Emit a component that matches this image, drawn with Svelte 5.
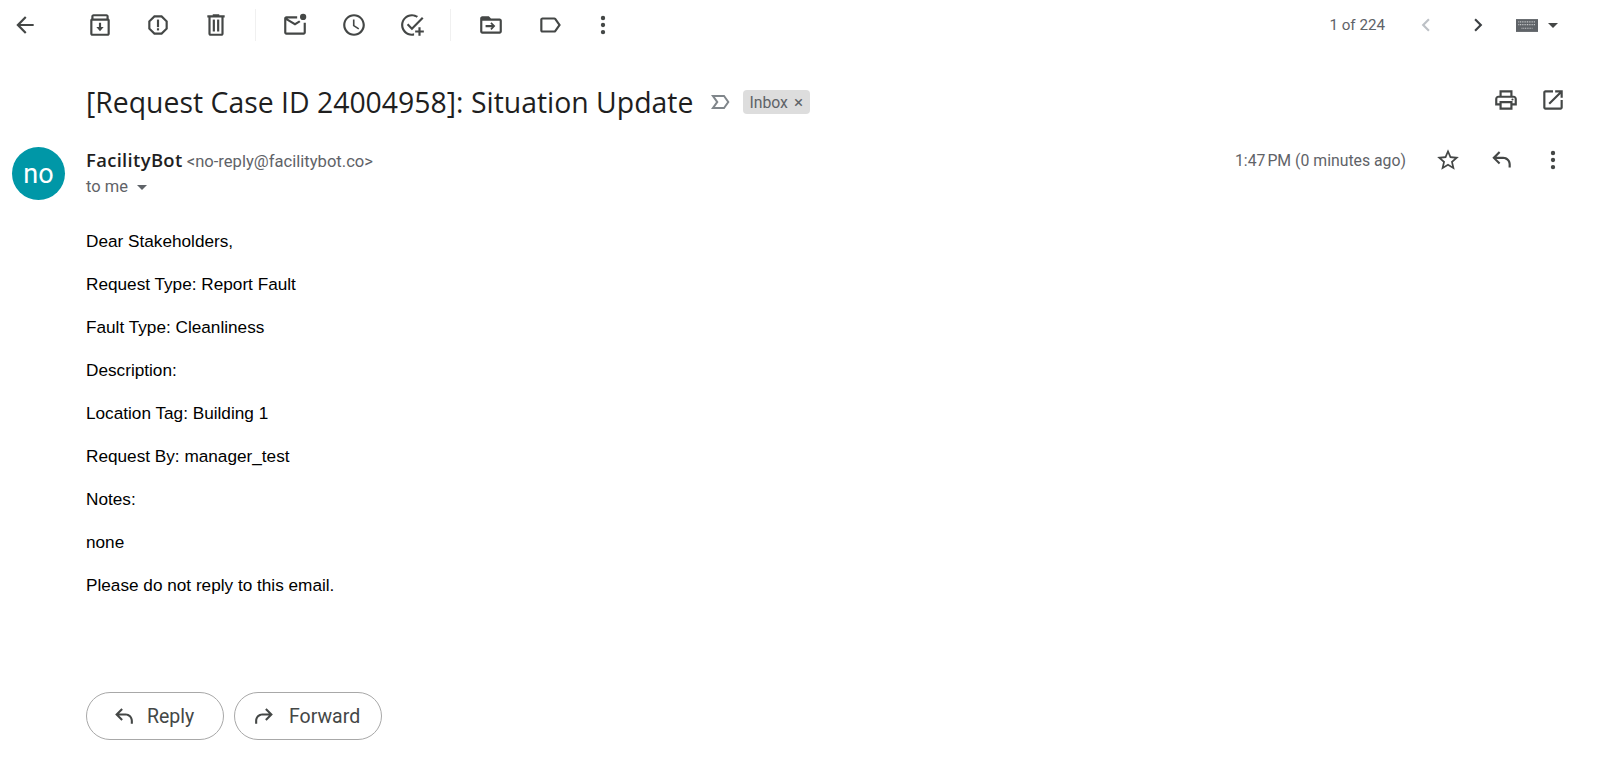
<script>
  const lines = [
    'Dear Stakeholders,',
    'Request Type: Report Fault',
    'Fault Type: Cleanliness',
    'Description:',
    'Location Tag: Building 1',
    'Request By: manager_test',
    'Notes:',
    'none',
    'Please do not reply to this email.'
  ];
</script>

<div class="page">
  <div class="toolbar">
    <button class="ic back" aria-label="Back">
      <svg viewBox="0 0 24 24"><path d="M20 11H7.800l5.600-5.600L12 4l-8 8 8 8 1.400-1.400L7.800 13H20z" /></svg>
    </button>
    <div class="group first">
      <button class="ic" aria-label="Archive">
        <svg viewBox="0 0 24 24"><path d="M20 6V4c0-1.100-.9-2-2-2H6c-1.100 0-2 .9-2 2v2c-.6.400-1 1-1 1.700V20c0 1.100.9 2 2 2h14c1.100 0 2-.9 2-2V7.700c0-.7-.4-1.300-1-1.700zM6 4h12v2H6V4zm13 16H5V8h14v12z" /><path d="M13 10h-2v3.800H8.600l3.400 3.900 3.400-3.900H13z" /></svg>
      </button>
      <button class="ic" aria-label="Report spam">
        <svg viewBox="0 0 24 24"><path d="M15.700 3H8.300L3 8.300v7.400L8.300 21h7.400l5.300-5.300V8.300L15.700 3zM19 14.900 14.900 19H9.100L5 14.900V9.100L9.100 5h5.800L19 9.100v5.800z" /><rect x="11" y="7" width="2" height="7" /><rect x="11" y="15" width="2" height="2" /></svg>
      </button>
      <button class="ic" aria-label="Delete">
        <svg viewBox="0 0 24 24"><path d="M15 3V2H9v1H4v2h1v15c0 1.100.9 2 2 2h10c1.100 0 2-.9 2-2V5h1V3h-5zm2 17H7V5h10v15z" /><rect x="9" y="7" width="2" height="11" /><rect x="13" y="7" width="2" height="11" /></svg>
      </button>
    </div>
    <div class="group second">
      <button class="ic" aria-label="Mark as unread">
        <svg viewBox="0 0 24 24"><path d="M20 19H4V7.500l8 5 5.100-3.200-1.300-1.500L12 10.200 5 6h9V4H4c-1.100 0-2 .9-2 2v13c0 1.100.9 2 2 2h16c1.100 0 2-.9 2-2V10h-2v9z" /><circle cx="19.500" cy="4.500" r="2.900" /></svg>
      </button>
      <button class="ic" aria-label="Snooze">
        <svg viewBox="0 0 24 24"><path d="M12 2C6.500 2 2 6.500 2 12s4.500 10 10 10 10-4.500 10-10S17.500 2 12 2zm0 18c-4.400 0-8-3.600-8-8s3.600-8 8-8 8 3.600 8 8-3.600 8-8 8z" /><path d="M12.500 7H11v6l5 3.200.8-1.300-4.300-2.600z" /></svg>
      </button>
      <button class="ic" aria-label="Add to tasks">
        <svg viewBox="0 0 24 24"><path d="M11 20c-4.400 0-8-3.600-8-8s3.600-8 8-8c1.600 0 3 .5 4.300 1.300l1.400-1.500C15.100 2.700 13.100 2 11 2 5.500 2 1 6.500 1 12s4.500 10 10 10c.7 0 1.300-.1 2-.2V19.700c-.6.200-1.300.3-2 .3z" /><path d="M20.300 4.700 11 14l-3.300-3.300-1.400 1.400L11 16.800 21.700 6.100z" /><path d="M19 14h-2v3h-3v2h3v3h2v-3h3v-2h-3z" /></svg>
      </button>
    </div>
    <div class="group third">
      <button class="ic" aria-label="Move to">
        <svg viewBox="0 0 24 24"><path d="M20 6h-8l-2-2H4c-1.100 0-2 .9-2 2v12c0 1.100.9 2 2 2h16c1.100 0 2-.9 2-2V8c0-1.100-.9-2-2-2zm0 12H4V8h16v10z" /><path d="M12.500 9.500 11.400 10.600 12.800 12H7v2h5.800l-1.400 1.400 1.100 1.100 3.500-3.500z" /></svg>
      </button>
      <button class="ic" aria-label="Labels">
        <svg viewBox="0 0 24 24"><path d="M17.600 5.800C17.200 5.300 16.600 5 16 5H5c-1.100 0-2 .9-2 2v10c0 1.100.9 2 2 2h11c.6 0 1.200-.3 1.600-.8L22 12l-4.400-6.200zM16 17H5V7h11l3.600 5L16 17z" /></svg>
      </button>
      <button class="ic last" aria-label="More">
        <svg viewBox="0 0 24 24"><circle cx="12" cy="5.500" r="2" /><circle cx="12" cy="12" r="2" /><circle cx="12" cy="18.500" r="2" /></svg>
      </button>
    </div>
    <div class="spacer"></div>
    <span class="count">1 of 224</span>
    <button class="ic pager dim" aria-label="Newer">
      <svg viewBox="0 0 24 24"><path d="M15.400 7.400 14 6l-6 6 6 6 1.400-1.400L10.800 12z" /></svg>
    </button>
    <button class="ic pager" aria-label="Older">
      <svg viewBox="0 0 24 24"><path d="M8.600 7.400 10 6l6 6-6 6-1.400-1.400L13.200 12z" /></svg>
    </button>
    <div class="kbd">
      <svg class="keys" viewBox="0 0 24 14"><rect width="24" height="14" fill="#5f6368" /><path d="M2.500 3h19M2.500 6h19M6 10h12" stroke="#c4c6c8" stroke-width="1.300" stroke-dasharray="1.100 .8" /></svg>
      <span class="caret"></span>
    </div>
  </div>

  <div class="subject">
    <h1>[Request Case ID 24004958]: Situation Update</h1>
    <svg class="imp" viewBox="0 0 24 24"><path d="M3 5h13.500l5 7-5 7H3l5-7-5-7zm3.900 2 3.600 5-3.600 5h8.700l3.500-5-3.500-5H6.900z" /></svg>
    <span class="chip">Inbox <span class="x">×</span></span>
    <div class="spacer"></div>
    <button class="ic" aria-label="Print">
      <svg viewBox="0 0 24 24"><path d="M19 8h-1V3H6v5H5c-1.700 0-3 1.300-3 3v6h4v4h12v-4h4v-6c0-1.700-1.300-3-3-3zM8 5h8v3H8V5zm8 14H8v-4h8v4zm4-4h-2v-2H6v2H4v-4c0-.6.4-1 1-1h14c.6 0 1 .4 1 1v4z" /><circle cx="18" cy="11.500" r="1" /></svg>
    </button>
    <button class="ic" aria-label="In new window">
      <svg viewBox="0 0 24 24"><path d="M19 19H5V5h7V3H5c-1.100 0-2 .9-2 2v14c0 1.100.9 2 2 2h14c1.100 0 2-.9 2-2v-7h-2v7z" /><path d="M14 3v2h3.600l-9.800 9.800 1.400 1.400L19 6.400V10h2V3z" /></svg>
    </button>
  </div>

  <div class="message">
    <div class="avatar">no</div>
    <div class="content">
      <div class="head">
        <div class="who">
          <div class="from"><b>FacilityBot</b> <span class="addr">&lt;no-reply@facilitybot.co&gt;</span></div>
          <div class="to">to me <span class="caret small"></span></div>
        </div>
        <div class="meta">
          <span class="time">1:47&#8239;PM (0 minutes ago)</span>
          <button class="ic" aria-label="Star">
            <svg viewBox="0 0 24 24"><path d="M22 9.240l-7.190-.62L12 2 9.190 8.630 2 9.240l5.460 4.730L5.820 21 12 17.270 18.180 21l-1.630-7.030L22 9.240zM12 15.400l-3.760 2.270 1-4.280-3.320-2.880 4.380-.38L12 6.100l1.710 4.040 4.380.38-3.320 2.880 1 4.280L12 15.400z" /></svg>
          </button>
          <button class="ic" aria-label="Reply">
            <svg viewBox="0 0 24 24"><path d="M21 19h-2v-3c0-2.800-2.200-5-5-5H7.800l3.600 3.600L10 16 4 10l6-6 1.400 1.400L7.800 9H14c3.900 0 7 3.100 7 7v3z" /></svg>
          </button>
          <button class="ic" aria-label="More">
            <svg viewBox="0 0 24 24"><circle cx="12" cy="5.500" r="2" /><circle cx="12" cy="12" r="2" /><circle cx="12" cy="18.500" r="2" /></svg>
          </button>
        </div>
      </div>
      <div class="body">
        {#each lines as line}
          <p>{line}</p>
        {/each}
      </div>
      <div class="actions">
        <button class="pill reply">
          <svg viewBox="0 0 24 24"><path d="M21 19h-2v-3c0-2.800-2.200-5-5-5H7.800l3.600 3.600L10 16 4 10l6-6 1.400 1.400L7.800 9H14c3.900 0 7 3.100 7 7v3z" /></svg>
          Reply
        </button>
        <button class="pill forward">
          <svg viewBox="0 0 24 24"><path d="M3 19h2v-3c0-2.800 2.200-5 5-5h6.200l-3.600 3.600L14 16l6-6-6-6-1.400 1.400L16.200 9H10c-3.900 0-7 3.100-7 7v3z" /></svg>
          Forward
        </button>
      </div>
    </div>
  </div>
</div>

<style>
  :global(body) {
    background: #fff;
  }

  .page {
    width: 1600px;
    height: 757px;
    overflow: hidden;
    box-sizing: border-box;
    font-family: Roboto, "Liberation Sans", sans-serif;
    color: #202124;
  }

  button {
    padding: 0;
    border: none;
    background: none;
    font: inherit;
  }

  .ic {
    width: 26px;
    height: 26px;
    flex: none;
    display: flex;
  }

  .ic svg {
    width: 100%;
    height: 100%;
    fill: #444746;
  }

  .toolbar {
    height: 50px;
    display: flex;
    align-items: center;
    padding-left: 12px;
    padding-right: 42px;
  }

  .group {
    display: flex;
    align-items: center;
    gap: 33px;
    height: 32px;
    border-left: 1px solid #f0f0f0;
  }

  .group.first {
    margin-left: 49px;
    padding-right: 26px;
    gap: 32px;
    border-left: none;
  }

  .group.second {
    padding: 0 24px 0 26px;
  }

  .group.third {
    padding-left: 27px;
  }

  .group .last {
    margin-left: -6px;
  }

  .spacer {
    flex: 1;
  }

  .count {
    font-size: 15.200px;
    color: #5f6368;
    margin-right: 28px;
  }

  .pager {
    margin-right: 26px;
  }

  .pager svg {
    fill: #3c4043;
  }

  .pager.dim svg {
    fill: #bdc1c6;
  }

  .kbd {
    display: flex;
    align-items: center;
    gap: 10px;
  }

  .pager + .kbd {
    margin-left: -1px;
  }

  .keys {
    width: 22px;
    height: 13px;
  }

  .caret {
    width: 0;
    height: 0;
    border-left: 5px solid transparent;
    border-right: 5px solid transparent;
    border-top: 5px solid #444746;
  }

  .caret.small {
    display: inline-block;
    vertical-align: middle;
    margin-left: 5px;
    border-top-color: #5f6368;
  }

  .subject {
    height: 52px;
    margin-top: 26px;
    display: flex;
    align-items: center;
    padding-left: 86px;
    padding-right: 34px;
  }

  .subject h1 {
    margin: 0;
    font-family: "Open Sans", sans-serif;
    font-weight: 400;
    font-size: 28.400px;
    color: #1f1f1f;
  }

  .imp {
    width: 24px;
    height: 24px;
    margin-left: 15px;
    fill: #80868b;
  }

  .chip {
    margin-left: 11px;
    height: 24px;
    padding: 0 7px 0 6px;
    display: flex;
    align-items: center;
    gap: 6px;
    background: #dddddd;
    border-radius: 4px;
    font-size: 15.800px;
    color: #5f6368;
  }

  .x {
    font-size: 17px;
  }

  .subject .ic {
    margin-bottom: 4px;
  }

  .subject .ic + .ic {
    margin-left: 21px;
  }

  .message {
    display: flex;
    margin-top: 19px;
    padding-left: 12px;
  }

  .avatar {
    width: 53px;
    height: 53px;
    flex: none;
    border-radius: 50%;
    background: #0097a7;
    color: #fff;
    font-size: 27px;
    display: flex;
    align-items: center;
    justify-content: center;
  }

  .content {
    flex: 1;
    padding-left: 21px;
    padding-right: 34px;
  }

  .head {
    display: flex;
    justify-content: space-between;
  }

  .from {
    font-size: 16.600px;
    line-height: 26px;
    color: #5f6368;
  }

  .from b {
    font-family: "Open Sans", sans-serif;
    font-size: 18.400px;
    font-weight: 600;
    letter-spacing: 0.35px;
    color: #1f1f1f;
  }

  .to {
    font-size: 16.500px;
    line-height: 24px;
    color: #5f6368;
  }

  .meta {
    display: flex;
    align-items: center;
    height: 26px;
  }

  .time {
    font-size: 15.800px;
    color: #5f6368;
    margin-right: 29px;
  }

  .meta .ic + .ic {
    margin-left: 26.500px;
  }

  .body {
    margin-top: 33px;
    font-family: "Liberation Sans", Arial, sans-serif;
    font-size: 17.200px;
    color: #000;
  }

  .body p {
    margin: 0 0 24px;
    line-height: 19px;
  }

  .actions {
    display: flex;
    gap: 10px;
    margin-top: 97px;
  }

  .pill {
    height: 48px;
    box-sizing: border-box;
    display: flex;
    align-items: center;
    border: 1px solid #a8a8a8;
    border-radius: 24px;
    font-size: 19.500px;
    color: #444746;
  }

  .pill svg {
    width: 25px;
    height: 25px;
    fill: #444746;
  }

  .reply {
    width: 138px;
    padding-left: 24px;
    gap: 11px;
  }

  .forward {
    width: 148px;
    padding-left: 17px;
    gap: 12px;
  }
</style>
